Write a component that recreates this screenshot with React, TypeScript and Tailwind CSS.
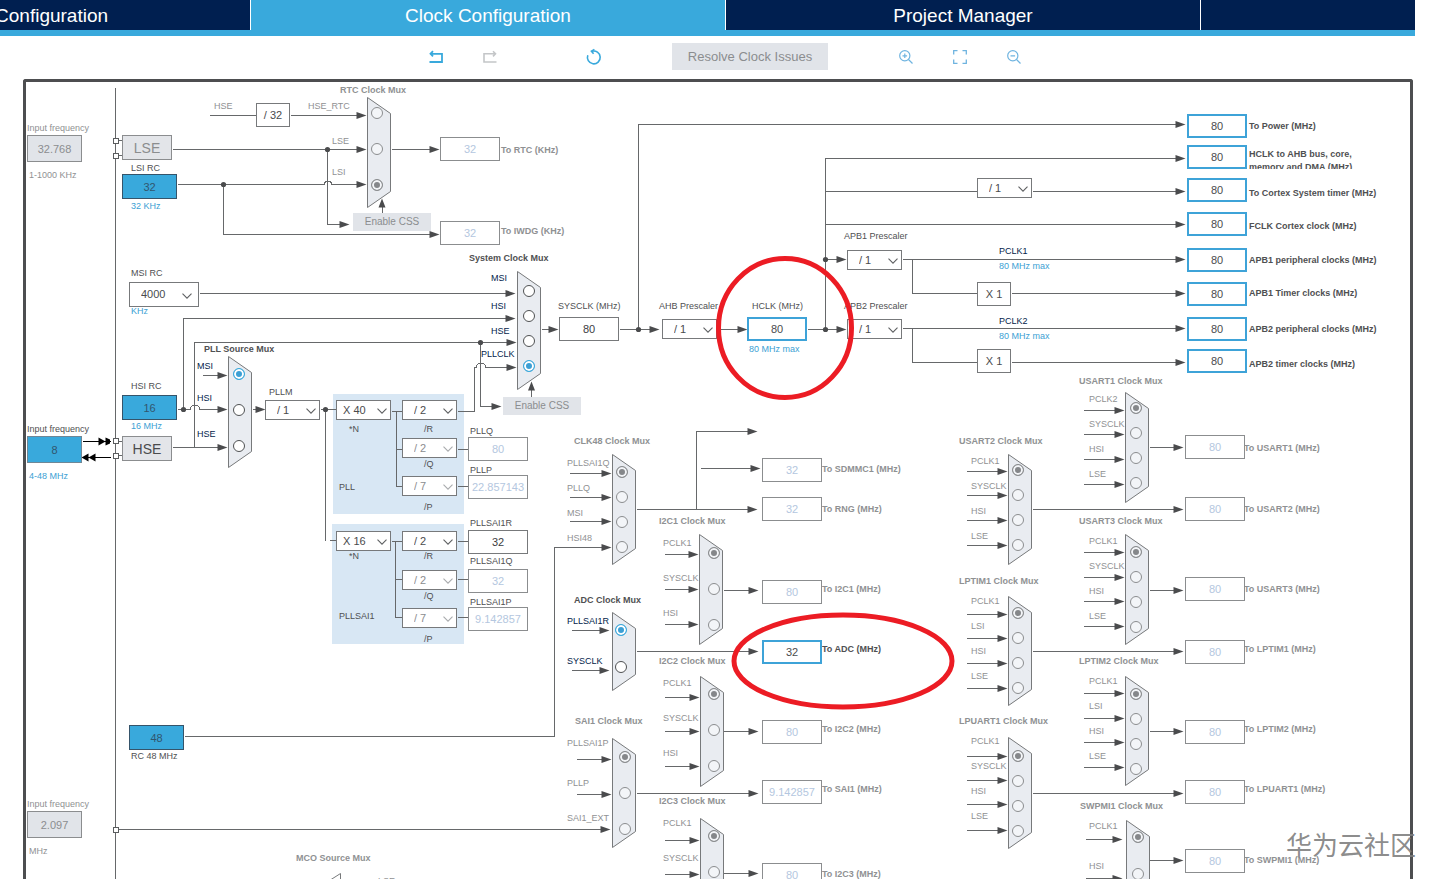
import { useId } from "react";

/* Diagram coordinates of the frame's inner top-left corner. */
const ORIGIN_X = 26;
const ORIGIN_Y = 82;
const at = (x: number, y: number) => ({ left: x - ORIGIN_X, top: y - ORIGIN_Y });

type Tone = "gray" | "dark" | "blue" | "navy";

const TONES: Record<Tone, string> = {
  gray: "text-[#8f9193]",
  dark: "text-[#4f5052]",
  blue: "text-[#3c9fd4]",
  navy: "text-[#03234b]",
};

interface TextItem {
  x: number;
  y: number;
  text: string;
  tone?: Tone;
  bold?: boolean;
  htmlFor?: string;
}

function Text({ x, y, text, tone = "gray", bold, htmlFor }: TextItem) {
  const cls = `absolute whitespace-nowrap text-[9px] leading-3 ${bold ? "font-bold" : ""} ${TONES[tone]}`;
  return htmlFor ? (
    <label htmlFor={htmlFor} className={cls} style={at(x, y - 6)}>{text}</label>
  ) : (
    <span className={cls} style={at(x, y - 6)}>{text}</span>
  );
}

/* ---------- Value fields ---------- */

type Kind = "off" | "plain" | "target" | "source" | "sourceInput" | "disabledInput";

const KINDS: Record<Kind, string> = {
  off: "h-6 w-[60px] border border-[#8b8d8f] bg-white text-[#b4c7e0]",
  plain: "h-6 w-[60px] border border-[#77797b] bg-white text-[#3c3d3f]",
  target: "h-6 w-[60px] border-2 border-[#3ea3d8] bg-white text-[#4a4b4d]",
  source: "h-[25px] w-[55px] border border-[#35546a] bg-[#39a9dc] text-[#31566e]",
  sourceInput: "h-[27px] w-[55px] border border-[#6f8796] bg-[#39a9dc] text-[#31566e]",
  disabledInput: "h-[27px] w-[55px] border border-[#8b8d8f] bg-[#e1e4e9] text-[#8b8d8f]",
};

interface FieldItem {
  x: number;
  y: number;
  value: string;
  kind: Kind;
  label: string;
  lx: number;
  ly: number;
  tone?: Tone;
  bold?: boolean;
  wrap?: boolean;
}

function Field({ x, y, value, kind, label, lx, ly, tone, bold, wrap }: FieldItem) {
  const id = useId();
  return (
    <>
      {wrap ? (
        <label
          htmlFor={id}
          className="absolute h-[21px] w-[120px] overflow-hidden text-[9px] leading-[13px] font-bold text-[#4f5052]"
          style={at(lx, ly - 6)}
        >
          {label}
        </label>
      ) : (
        <Text x={lx} y={ly} text={label} tone={tone} bold={bold} htmlFor={id} />
      )}
      <input
        id={id}
        type="text"
        defaultValue={value}
        disabled={kind === "off" || kind === "disabledInput"}
        className={`absolute p-0 text-center text-[11px] outline-none ${KINDS[kind]}`}
        style={at(x, y)}
      />
    </>
  );
}

const out = (x: number, y: number, lx: number, ly: number, label: string, value = "80"): FieldItem => ({
  x, y, value, kind: "off", label, lx, ly, bold: true,
});
const bus = (y: number, ly: number, label: string, wrap = false): FieldItem => ({
  x: 1187, y, value: "80", kind: "target", label, lx: 1249, ly, bold: true, tone: "dark", wrap,
});

const FIELDS: FieldItem[] = [
  { x: 27, y: 135, value: "32.768", kind: "disabledInput", label: "Input frequency", lx: 27, ly: 128 },
  { x: 27, y: 436, value: "8", kind: "sourceInput", label: "Input frequency", lx: 27, ly: 429, tone: "dark" },
  { x: 27, y: 811, value: "2.097", kind: "disabledInput", label: "Input frequency", lx: 27, ly: 804 },
  { x: 122, y: 174, value: "32", kind: "source", label: "LSI RC", lx: 131, ly: 168, tone: "dark" },
  { x: 122, y: 395, value: "16", kind: "source", label: "HSI RC", lx: 131, ly: 386, tone: "dark" },
  { x: 129, y: 725, value: "48", kind: "source", label: "RC 48 MHz", lx: 131, ly: 756, tone: "dark" },
  out(440, 137, 501, 150, "To RTC (KHz)", "32"),
  out(440, 221, 501, 231, "To IWDG (KHz)", "32"),
  { x: 559, y: 317, value: "80", kind: "plain", label: "SYSCLK (MHz)", lx: 558, ly: 306, tone: "dark" },
  { x: 747, y: 317, value: "80", kind: "target", label: "HCLK (MHz)", lx: 752, ly: 306, tone: "dark" },
  { x: 468, y: 437, value: "80", kind: "off", label: "PLLQ", lx: 470, ly: 431, tone: "dark" },
  { x: 468, y: 475, value: "22.857143", kind: "off", label: "PLLP", lx: 470, ly: 470, tone: "dark" },
  { x: 468, y: 530, value: "32", kind: "plain", label: "PLLSAI1R", lx: 470, ly: 523, tone: "dark" },
  { x: 468, y: 569, value: "32", kind: "off", label: "PLLSAI1Q", lx: 470, ly: 561, tone: "dark" },
  { x: 468, y: 607, value: "9.142857", kind: "off", label: "PLLSAI1P", lx: 470, ly: 602, tone: "dark" },
  bus(114, 126, "To Power (MHz)"),
  bus(145, 154, "HCLK to AHB bus, core, memory and DMA (MHz)", true),
  bus(178, 193, "To Cortex System timer (MHz)"),
  bus(212, 226, "FCLK Cortex clock (MHz)"),
  bus(248, 260, "APB1 peripheral clocks (MHz)"),
  bus(282, 293, "APB1 Timer clocks (MHz)"),
  bus(317, 329, "APB2 peripheral clocks (MHz)"),
  bus(349, 364, "APB2 timer clocks (MHz)"),
  out(762, 458, 822, 469, "To SDMMC1 (MHz)", "32"),
  out(762, 497, 822, 509, "To RNG (MHz)", "32"),
  out(762, 580, 822, 589, "To I2C1 (MHz)"),
  { x: 762, y: 640, value: "32", kind: "target", label: "To ADC (MHz)", lx: 822, ly: 649, bold: true, tone: "dark" },
  out(762, 720, 822, 729, "To I2C2 (MHz)"),
  out(762, 780, 822, 789, "To SAI1 (MHz)", "9.142857"),
  out(762, 863, 822, 874, "To I2C3 (MHz)"),
  out(1185, 435, 1244, 448, "To USART1 (MHz)"),
  out(1185, 497, 1244, 509, "To USART2 (MHz)"),
  out(1185, 577, 1244, 589, "To USART3 (MHz)"),
  out(1185, 640, 1244, 649, "To LPTIM1 (MHz)"),
  out(1185, 720, 1244, 729, "To LPTIM2 (MHz)"),
  out(1185, 780, 1244, 789, "To LPUART1 (MHz)"),
  out(1185, 849, 1244, 860, "To SWPMI1 (MHz)"),
];

/* ---------- Free text ---------- */

const TEXTS: TextItem[] = [
  { x: 29, y: 175, text: "1-1000 KHz" },
  { x: 131, y: 206, text: "32 KHz", tone: "blue" },
  { x: 131, y: 311, text: "KHz", tone: "blue" },
  { x: 131, y: 426, text: "16 MHz", tone: "blue" },
  { x: 29, y: 476, text: "4-48 MHz", tone: "blue" },
  { x: 29, y: 851, text: "MHz" },
  { x: 214, y: 106, text: "HSE" },
  { x: 749, y: 349, text: "80 MHz max", tone: "blue" },
  { x: 999, y: 251, text: "PCLK1", tone: "navy" },
  { x: 999, y: 266, text: "80 MHz max", tone: "blue" },
  { x: 999, y: 321, text: "PCLK2", tone: "navy" },
  { x: 999, y: 336, text: "80 MHz max", tone: "blue" },
  { x: 339, y: 487, text: "PLL", tone: "dark" },
  { x: 339, y: 616, text: "PLLSAI1", tone: "dark" },
  { x: 296, y: 858, text: "MCO Source Mux", bold: true },
  { x: 378, y: 881, text: "LSE" },
];

/* ---------- Prescaler drop-downs ---------- */

interface PickItem {
  x: number;
  y: number;
  value: string;
  label: string;
  lx: number;
  ly: number;
  wide?: boolean;
  pad?: boolean;
  off?: boolean;
}

const PICKS: PickItem[] = [
  { x: 129, y: 282, value: "4000", label: "MSI RC", lx: 131, ly: 273, wide: true },
  { x: 265, y: 400, value: "/ 1", label: "PLLM", lx: 269, ly: 392, pad: true },
  { x: 336, y: 400, value: "X 40", label: "*N", lx: 349, ly: 429 },
  { x: 402, y: 400, value: "/ 2", label: "/R", lx: 424, ly: 429, pad: true },
  { x: 402, y: 438, value: "/ 2", label: "/Q", lx: 424, ly: 464, pad: true, off: true },
  { x: 402, y: 476, value: "/ 7", label: "/P", lx: 424, ly: 507, pad: true, off: true },
  { x: 336, y: 531, value: "X 16", label: "*N", lx: 349, ly: 556 },
  { x: 402, y: 531, value: "/ 2", label: "/R", lx: 424, ly: 556, pad: true },
  { x: 402, y: 570, value: "/ 2", label: "/Q", lx: 424, ly: 596, pad: true, off: true },
  { x: 402, y: 608, value: "/ 7", label: "/P", lx: 424, ly: 639, pad: true, off: true },
  { x: 662, y: 319, value: "/ 1", label: "AHB Prescaler", lx: 659, ly: 306, pad: true },
  { x: 847, y: 250, value: "/ 1", label: "APB1 Prescaler", lx: 844, ly: 236, pad: true },
  { x: 847, y: 319, value: "/ 1", label: "APB2 Prescaler", lx: 844, ly: 306, pad: true },
  { x: 977, y: 178, value: "/ 1", label: "", lx: 0, ly: 0, pad: true },
];

function Pick({ x, y, value, label, lx, ly, wide, pad, off }: PickItem) {
  const id = useId();
  return (
    <>
      {label && <Text x={lx} y={ly} text={label} tone="dark" htmlFor={id} />}
      <div className={`absolute ${wide ? "h-[25px] w-[70px]" : "h-5 w-[55px]"}`} style={at(x, y)}>
        <select
          id={id}
          aria-label={label || "Cortex timer prescaler"}
          className={`block h-full w-full appearance-none border border-[#77797b] bg-white text-[11px] leading-none outline-none ${
            pad || wide ? "pl-[11px]" : "pl-[6px]"
          } ${off ? "text-[#8b8d8f]" : "text-[#4a4b4d]"}`}
        >
          <option>{value}</option>
        </select>
        <svg
          className={`pointer-events-none absolute top-1/2 -mt-[2px] h-[6px] w-[10px] ${wide ? "right-[7px]" : "right-1"}`}
          viewBox="0 0 10 6"
        >
          <path d="M0.5 0.7 5 5.2 9.5 0.7" fill="none" stroke={off ? "#a9abad" : "#5f6163"} strokeWidth="1.1" />
        </svg>
      </div>
    </>
  );
}

/* ---------- Multiplexers ---------- */

interface MuxInput {
  text: string;
  lx: number;
  ly: number;
  cy: number;
}

interface MuxItem {
  title: string;
  tx: number;
  ty: number;
  x: number;
  top: number;
  bottom: number;
  cx: number;
  active?: boolean;
  picked: number;
  inputs: MuxInput[];
}

const rows = (names: string[], lx: number, ly: number[], cy: number[]): MuxInput[] =>
  names.map((text, i) => ({ text, lx, ly: ly[i], cy: cy[i] }));
const steps = (start: number, gap: number, n: number) => Array.from({ length: n }, (_, i) => start + i * gap);

const FOUR = ["PCLK1", "SYSCLK", "HSI", "LSE"];
const FOUR_LP = ["PCLK1", "LSI", "HSI", "LSE"];
const THREE = ["PCLK1", "SYSCLK", "HSI"];

const MUXES: MuxItem[] = [
  {
    title: "RTC Clock Mux", tx: 340, ty: 90, x: 367, top: 97, bottom: 207, cx: 377, picked: 2,
    inputs: [
      { text: "HSE_RTC", lx: 308, ly: 106, cy: 113 },
      { text: "LSE", lx: 332, ly: 141, cy: 149 },
      { text: "LSI", lx: 332, ly: 172, cy: 185 },
    ],
  },
  {
    title: "PLL Source Mux", tx: 204, ty: 349, x: 228, top: 356, bottom: 467, cx: 239, picked: 0, active: true,
    inputs: rows(["MSI", "HSI", "HSE"], 197, [366, 398, 434], [374, 410, 446]),
  },
  {
    title: "System Clock Mux", tx: 469, ty: 258, x: 517, top: 271, bottom: 389, cx: 529, picked: 3, active: true,
    inputs: [
      { text: "MSI", lx: 491, ly: 278, cy: 291 },
      { text: "HSI", lx: 491, ly: 306, cy: 316 },
      { text: "HSE", lx: 491, ly: 331, cy: 341 },
      { text: "PLLCLK", lx: 481, ly: 354, cy: 366 },
    ],
  },
  {
    title: "CLK48 Clock Mux", tx: 574, ty: 441, x: 612, top: 454, bottom: 564, cx: 622, picked: 0,
    inputs: rows(["PLLSAI1Q", "PLLQ", "MSI", "HSI48"], 567, steps(463, 25, 4), steps(472, 25, 4)),
  },
  {
    title: "ADC Clock Mux", tx: 574, ty: 600, x: 612, top: 612, bottom: 690, cx: 621, picked: 0, active: true,
    inputs: rows(["PLLSAI1R", "SYSCLK"], 567, [621, 661], [630, 667]),
  },
  {
    title: "SAI1 Clock Mux", tx: 575, ty: 721, x: 612, top: 738, bottom: 847, cx: 625, picked: 0,
    inputs: rows(["PLLSAI1P", "PLLP", "SAI1_EXT"], 567, [743, 783, 818], [757, 793, 829]),
  },
  {
    title: "I2C1 Clock Mux", tx: 659, ty: 521, x: 699, top: 534, bottom: 644, cx: 714, picked: 0,
    inputs: rows(THREE, 663, steps(543, 35, 3), [553, 589, 625]),
  },
  {
    title: "I2C2 Clock Mux", tx: 659, ty: 661, x: 700, top: 676, bottom: 786, cx: 714, picked: 0,
    inputs: rows(THREE, 663, steps(683, 35, 3), [694, 730, 766]),
  },
  {
    title: "I2C3 Clock Mux", tx: 659, ty: 801, x: 700, top: 818, bottom: 928, cx: 714, picked: 0,
    inputs: rows(["PCLK1", "SYSCLK"], 663, [823, 858], [836, 872]),
  },
  {
    title: "USART1 Clock Mux", tx: 1079, ty: 381, x: 1125, top: 392, bottom: 502, cx: 1136, picked: 0,
    inputs: rows(["PCLK2", "SYSCLK", "HSI", "LSE"], 1089, steps(399, 25, 4), steps(408, 25, 4)),
  },
  {
    title: "USART2 Clock Mux", tx: 959, ty: 441, x: 1008, top: 454, bottom: 564, cx: 1018, picked: 0,
    inputs: rows(FOUR, 971, steps(461, 25, 4), steps(470, 25, 4)),
  },
  {
    title: "USART3 Clock Mux", tx: 1079, ty: 521, x: 1125, top: 534, bottom: 644, cx: 1136, picked: 0,
    inputs: rows(FOUR, 1089, steps(541, 25, 4), steps(552, 25, 4)),
  },
  {
    title: "LPTIM1 Clock Mux", tx: 959, ty: 581, x: 1008, top: 596, bottom: 705, cx: 1018, picked: 0,
    inputs: rows(FOUR_LP, 971, steps(601, 25, 4), steps(613, 25, 4)),
  },
  {
    title: "LPTIM2 Clock Mux", tx: 1079, ty: 661, x: 1125, top: 676, bottom: 785, cx: 1136, picked: 0,
    inputs: rows(FOUR_LP, 1089, steps(681, 25, 4), steps(694, 25, 4)),
  },
  {
    title: "LPUART1 Clock Mux", tx: 959, ty: 721, x: 1008, top: 737, bottom: 848, cx: 1018, picked: 0,
    inputs: rows(FOUR, 971, steps(741, 25, 4), steps(756, 25, 4)),
  },
  {
    title: "SWPMI1 Clock Mux", tx: 1080, ty: 806, x: 1126, top: 820, bottom: 960, cx: 1138, picked: 0,
    inputs: rows(["PCLK1", "HSI"], 1089, [826, 866], [837, 874]),
  },
];

function Mux({ title, tx, ty, cx, active, picked, inputs }: MuxItem) {
  const id = useId();
  const ring = active
    ? "border-[#4f5153] bg-white checked:border-[#39a9dc] checked:bg-[#3c9fd4] checked:shadow-[inset_0_0_0_2px_#ffffff]"
    : "border-[#8b8d8f] bg-[#f3f5f8] checked:bg-[#85878a] checked:shadow-[inset_0_0_0_2px_#f3f5f8]";
  return (
    <div role="radiogroup" aria-label={title}>
      <Text x={tx} y={ty} text={title} bold tone={active ? "dark" : "gray"} />
      {inputs.map((input, i) => (
        <div key={input.text}>
          <Text x={input.lx} y={input.ly} text={input.text} tone={active ? "navy" : "gray"} htmlFor={`${id}-${i}`} />
          <input
            id={`${id}-${i}`}
            type="radio"
            name={id}
            defaultChecked={i === picked}
            className={`absolute m-0 size-3 appearance-none rounded-full border ${ring}`}
            style={at(cx - 6, input.cy - 6)}
          />
        </div>
      ))}
    </div>
  );
}

/* ---------- Wires ---------- */

const WIRES = [
  "M115 87V879",
  "M118 140H122M118 155H122M118 441H122M118 455H122M118 829H604",
  "M209 115H256M290 115H360M172 149H360M391 149H432",
  "M177 184H324A3 3 0 0 1 331 184H360M327 149V224H341M223 184V234H432",
  "M382 213V204",
  "M199 293H508M183 409V318H508M177 409H190A4 4 0 0 1 199 409H220",
  "M172 447H220M194 447V342H509M480 342V406H493",
  "M202 375H220M252 409H258M320 409H336M325 409V540M329 540H336",
  "M391 411H402M396 411V486M396 449H402M396 486H402M457 449H468M457 486H468",
  "M457 411H474V367H476A4 4 0 0 1 485 367H510",
  "M391 541H402M395 541V617M395 579H402M395 617H402M457 541H468M457 579H468M457 617H468",
  "M531 397V386M541 329H550M619 329H652M638 329V124H1178",
  "M717 329H740M807 329H840M825 329V158H1178M825 191H977M1032 191H1178M825 224H1178M825 259H840",
  "M902 259H1178M912 259V293H977M1011 293H1178M902 328H1178M912 328V362H977M1011 362H1178",
  "M184 736H554V547H604M569 473H604M569 497H604M569 521H604",
  "M636 509H750M696 509V431H750M700 468H752",
  "M571 630H602M571 670H602M636 651H752M576 759H604M576 794H604M636 793H752",
  "M664 554H692M664 589H692M664 624H692M723 590H752",
  "M664 697H692M664 731H692M664 766H692M723 731H752",
  "M664 840H692M664 874H692M723 873H752",
];

/* Rightward arrow tips. */
const TIPS: [number, number][] = [
  [366, 115], [366, 149], [366, 184], [439, 149], [349, 224], [439, 234],
  [515, 293], [515, 318], [516, 342], [516, 367], [501, 406],
  [227, 375], [227, 409], [227, 447], [265, 409], [558, 329], [659, 329], [747, 329],
  [846, 259], [846, 329],
  [1185, 124], [1185, 158], [1185, 191], [1185, 224], [1185, 259], [1185, 293], [1185, 328], [1185, 362],
  [611, 473], [611, 497], [611, 521], [611, 547], [757, 431], [760, 468], [757, 509],
  [609, 630], [609, 670], [758, 651], [611, 759], [611, 794], [610, 829], [758, 793],
  [698, 554], [698, 589], [698, 624], [758, 590],
  [699, 697], [699, 731], [699, 766], [758, 731],
  [699, 840], [699, 874], [758, 873],
];

/* Short feeder wires, drawn from x1 to an arrow tip at x2. */
const feed = (x1: number, x2: number, ys: number[]) => ys.map((y) => [x1, x2, y]);
const FEEDS = [
  ...feed(1083, 1124, [410, 434, 459, 484, 552, 577, 601, 626, 693, 718, 742, 767]),
  ...feed(966, 1007, [471, 495, 520, 545, 614, 638, 663, 688, 756, 780, 804, 830]),
  ...feed(1085, 1122, [839, 878]),
  ...feed(1149, 1183, [447, 590, 731, 860]),
  ...feed(1032, 1183, [509, 651, 793]),
];

const DOTS = [
  [327, 149], [223, 184], [183, 409], [480, 342], [325, 409], [638, 329], [825, 259], [825, 329],
];

const PORTS = [138, 153, 438, 453, 827];

function Tip({ x, y }: { x: number; y: number }) {
  return <path d={`M${x} ${y}L${x - 10} ${y - 3.5}V${y + 3.5}Z`} />;
}

function Wiring() {
  return (
    <svg className="pointer-events-none absolute top-0 left-0" width="1384" height="797" viewBox="26 82 1384 797">
      <rect x="333" y="394" width="131" height="120" fill="#d8e7f4" />
      <rect x="332" y="524" width="132" height="120" fill="#d8e7f4" />
      <g transform="translate(0.5 0.5)">
        <g fill="none" stroke="#66686a" strokeWidth="1" shapeRendering="crispEdges">
          {WIRES.map((d) => <path key={d} d={d} />)}
          {FEEDS.map(([x1, x2, y]) => <path key={`${x1}-${y}`} d={`M${x1} ${y}H${x2 - 8}`} />)}
          <path d="M82 441H110M82 457H110" stroke="#000" />
        </g>
        <g fill="#4a4b4d">
          {TIPS.map(([x, y]) => <Tip key={`${x}-${y}`} x={x} y={y} />)}
          {FEEDS.map(([x1, x2, y]) => <Tip key={`${x1}-${y}`} x={x2} y={y} />)}
          {DOTS.map(([x, y]) => <circle key={`${x}-${y}`} cx={x} cy={y} r="2.6" />)}
          <path d="M381.5 198 378 207H385ZM531 381 527.5 390H534.5Z" />
        </g>
        <path d="M105 441 98 437V445ZM109.5 439V443L105 445V437ZM88 457 95 453V461ZM81 457 88 453V461Z" fill="#000" />
        <g fill="#fff" stroke="#5a5c5e">
          {PORTS.map((y) => <rect key={y} x="113" y={y} width="5" height="5" />)}
        </g>
        <g fill="#e9ecf1" stroke="#77797b">
          {MUXES.map(({ title, x, top, bottom }) => (
            <path key={title} d={`M${x} ${top}L${x + 23} ${top + 16}V${bottom - 16}L${x} ${bottom}Z`} />
          ))}
        </g>
        <path d="M329 880 340 873V880" fill="none" stroke="#77797b" />
      </g>
    </svg>
  );
}

/* ---------- Fixed factors and buttons ---------- */

const FACTORS = [
  { x: 256, y: 103, text: "/ 32" },
  { x: 977, y: 282, text: "X 1" },
  { x: 977, y: 349, text: "X 1" },
];

const OSCILLATORS = [
  { y: 135, text: "LSE", tone: "text-[#8b8d8f]" },
  { y: 436, text: "HSE", tone: "text-[#4a4b4d]" },
];

const CSS_BUTTONS = [
  { x: 353, y: 213 },
  { x: 503, y: 397 },
];

function ClockTree() {
  return (
    <div className="relative h-[797px] overflow-hidden">
      <Wiring />
      {TEXTS.map((t) => <Text key={`${t.x}-${t.y}`} {...t} />)}
      {MUXES.map((m) => <Mux key={m.title} {...m} />)}
      {FIELDS.map((f) => <Field key={`${f.x}-${f.y}`} {...f} />)}
      {PICKS.map((p) => <Pick key={`${p.x}-${p.y}`} {...p} />)}
      {FACTORS.map((f) => (
        <div
          key={`${f.x}-${f.y}`}
          className="absolute flex h-6 w-[34px] items-center justify-center border border-[#77797b] bg-white text-[11px] text-[#4a4b4d]"
          style={at(f.x, f.y)}
        >
          {f.text}
        </div>
      ))}
      {OSCILLATORS.map((o) => (
        <button
          key={o.text}
          type="button"
          className={`absolute h-[25px] w-[50px] border border-[#8b8d8f] bg-[#e3e5e9] text-[14px] leading-none ${o.tone}`}
          style={at(122, o.y)}
        >
          {o.text}
        </button>
      ))}
      {CSS_BUTTONS.map((b) => (
        <button
          key={b.x}
          type="button"
          className="absolute h-[18px] w-[78px] bg-[#e1e4e9] text-[10px] leading-none text-[#8b8d8f]"
          style={at(b.x, b.y)}
        >
          Enable CSS
        </button>
      ))}
      <svg className="pointer-events-none absolute top-0 left-0" width="1384" height="797" viewBox="26 82 1384 797">
        <g fill="none" stroke="#ec1c24" strokeWidth="5">
          <ellipse cx="785" cy="328" rx="66.5" ry="69.5" />
          <ellipse cx="843" cy="661" rx="109" ry="46" />
        </g>
      </svg>
    </div>
  );
}

/* ---------- Header and toolbar ---------- */

function Tabs() {
  const tab = "flex h-[30px] w-[474px] shrink-0 items-center justify-center text-[19px] leading-none text-white";
  return (
    <nav className="mr-[19px] overflow-hidden border-b-[6px] border-[#39a9dc] bg-[#03234b]">
      <div className="-ml-[224px] flex gap-px bg-white">
        <a href="#pinout" className={`${tab} bg-[#001f50]`}>Pinout &amp; Configuration</a>
        <a href="#clock" className={`${tab} bg-[#39a9dc]`} aria-current="page">Clock Configuration</a>
        <a href="#project" className={`${tab} bg-[#001f50]`}>Project Manager</a>
        <a href="#tools" className={`${tab} bg-[#001f50]`}>Tools</a>
      </div>
    </nav>
  );
}

function Toolbar() {
  return (
    <div className="flex h-[43px] items-center justify-center pb-[2px] pl-4">
      <div className="flex gap-10">
        <button type="button" aria-label="Undo" className="text-[#39a9dc]">
          <svg className="block size-[14px]" viewBox="0 0 14 14" fill="none" stroke="currentColor" strokeWidth="1.8">
            <path d="M1.5 3.8H13V12H0.5M4 1.2 1.5 3.8 4 6.4" />
          </svg>
        </button>
        <button type="button" aria-label="Redo" className="text-[#c4c6c8]">
          <svg className="block size-[14px]" viewBox="0 0 14 14" fill="none" stroke="currentColor" strokeWidth="1.6">
            <path d="M12.5 3.8H1V12H13.5M10 1.2 12.5 3.8 10 6.4" />
          </svg>
        </button>
      </div>
      <button type="button" aria-label="Reset" className="mr-[71px] ml-[90px] text-[#39a9dc]">
        <svg className="block size-[14px] overflow-visible" viewBox="0 0 14 14" fill="none" stroke="currentColor" strokeWidth="1.6">
          <path d="M5 1.3A6.4 6.4 0 1 1 0.8 5.2" />
          <path d="M7.4 -0.6 4.4 1.2 6.6 3.8" />
        </svg>
      </button>
      <button type="button" className="h-[27px] w-[156px] bg-[#e1e4e9] text-[13px] leading-none text-[#8b8d8f]">
        Resolve Clock Issues
      </button>
      <div className="ml-[71px] flex gap-10 text-[#6fb4e0]">
        <button type="button" aria-label="Zoom in">
          <svg className="block size-[14px]" viewBox="0 0 14 14" fill="none" stroke="currentColor" strokeWidth="1.2">
            <circle cx="5.8" cy="5.8" r="5.1" />
            <path d="M9.5 9.5 13.5 13.5M3.5 5.8H8.1M5.8 3.5V8.1" />
          </svg>
        </button>
        <button type="button" aria-label="Fit to window">
          <svg className="block size-[14px]" viewBox="0 0 14 14" fill="none" stroke="currentColor" strokeWidth="1.3">
            <path d="M0.7 4.5V0.7H4.5M9.5 0.7H13.3V4.5M13.3 9.5V13.3H9.5M4.5 13.3H0.7V9.5" />
          </svg>
        </button>
        <button type="button" aria-label="Zoom out">
          <svg className="block size-[14px]" viewBox="0 0 14 14" fill="none" stroke="currentColor" strokeWidth="1.2">
            <circle cx="5.8" cy="5.8" r="5.1" />
            <path d="M9.5 9.5 13.5 13.5M3.5 5.8H8.1" />
          </svg>
        </button>
      </div>
    </div>
  );
}

export default function App() {
  return (
    <div className="overflow-hidden bg-white font-['Liberation_Sans',Arial,sans-serif]">
      <Tabs />
      <Toolbar />
      <main className="relative mr-[21px] ml-[23px]">
        <div className="rounded-t-[3px] border-[3px] border-b-0 border-[#4d4e50]">
          <ClockTree />
        </div>
        <p className="pointer-events-none absolute -right-[3px] bottom-[17px] font-['Noto_Sans_CJK_SC',sans-serif] text-[26px] leading-9 whitespace-nowrap text-[#7d7d7d]/90">
          华为云社区
        </p>
      </main>
    </div>
  );
}
